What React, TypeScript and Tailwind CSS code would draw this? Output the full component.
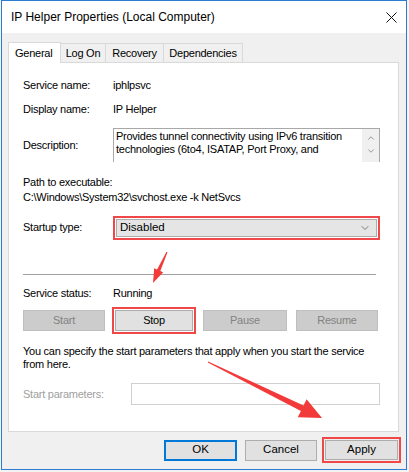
import { ChevronDown, ChevronUp } from "lucide-react";

const font = { fontFamily: '"Liberation Sans", Arial, sans-serif' };

function Btn({ label, disabled, className = "" }: { label: string; disabled?: boolean; className?: string }) {
    return (
        <div
            className={
                "flex items-center justify-center h-[21px] border " +
                (disabled ? "bg-[#cccccc] border-[#bfbfbf] text-[#838383] " : "bg-[#e1e1e1] border-[#adadad] text-black ") +
                className
            }
        >
            {label}
        </div>
    );
}

function RedBox({ children, className = "" }: { children: React.ReactNode; className?: string }) {
    return <div className={"border-2 border-[#f04848] p-[1px] " + className}>{children}</div>;
}

export default function App() {
    return (
        <div className="relative w-[409px] h-[472px] bg-[#f3f3f3] overflow-hidden" style={font}>
            <div className="ml-[1px] w-[406px] h-[470px] border border-[#2b7bd3] bg-[#f0f0f0] flex flex-col text-[11px] tracking-[-0.25px]">
                {/* title bar */}
                <div className="h-[32px] bg-white flex items-center justify-between pl-[9px] pr-[9px] text-[12px] tracking-normal text-black">
                    <span>IP Helper Properties (Local Computer)</span>
                    <svg width="11" height="11" viewBox="0 0 11 11">
                        <path d="M0.5 0.5L10.5 10.5M10.5 0.5L0.5 10.5" stroke="#111" strokeWidth="1" />
                    </svg>
                </div>

                {/* tabs */}
                <div className="flex items-end h-[29px] pl-[6px]">
                    <div className="h-[21px] pl-[6px] bg-white border border-b-0 border-[#d9d9d9] flex items-center w-[53px] relative top-[1px]">General</div>
                    <div className="h-[19px] w-[45px] border border-l-0 border-b-0 border-[#d9d9d9] flex items-center justify-center">Log On</div>
                    <div className="h-[19px] w-[58px] border border-l-0 border-b-0 border-[#d9d9d9] flex items-center justify-center">Recovery</div>
                    <div className="h-[19px] w-[79px] border border-l-0 border-b-0 border-[#d9d9d9] flex items-center justify-center">Dependencies</div>
                </div>

                {/* panel */}
                <div className="ml-[6px] w-[391px] h-[370px] bg-white border border-[#d9d9d9] px-[14px] text-black flex flex-col">
                    <div className="flex h-[14px] mt-[15px] items-center">
                        <span className="w-[90px]">Service name:</span>
                        <span>iphlpsvc</span>
                    </div>
                    <div className="flex h-[14px] mt-[10px] items-center">
                        <span className="w-[90px]">Display name:</span>
                        <span>IP Helper</span>
                    </div>
                    <div className="flex mt-[12px] items-center">
                        <span className="w-[90px]">Description:</span>
                        <div className="w-[267px] h-[34px] border border-[#a8a8a8] border-b-0 flex overflow-hidden">
                            <div className="flex-1 pl-[2px] pt-[1px] leading-[13px]">
                                Provides tunnel connectivity using IPv6 transition technologies (6to4, ISATAP, Port Proxy, and
                            </div>
                            <div className="w-[17px] bg-[#f0f0f0] flex flex-col items-center pt-[4px] text-[#606060]">
                                <ChevronUp size={10} strokeWidth={1.5} />
                                <ChevronDown size={10} strokeWidth={1.5} className="mt-[3px]" />
                            </div>
                        </div>
                    </div>
                    <div className="mt-[13px] leading-[15px]">Path to executable:</div>
                    <div className="leading-[15px]">C:\Windows\System32\svchost.exe -k NetSvcs</div>
                    <div className="flex mt-[11px] items-center">
                        <span className="w-[90px] relative -top-[1px]">Startup type:</span>
                        <RedBox className="w-[267px] h-[24px]">
                            <div className="h-full bg-[#e5e5e5] border border-[#adadad] flex items-center justify-between pl-[3px] pr-[5px] text-[11.5px] tracking-normal">
                                <span>Disabled</span>
                                <ChevronDown size={12} strokeWidth={1.5} className="text-[#555]" />
                            </div>
                        </RedBox>
                    </div>
                    <div className="mt-[34px] w-[353px] h-px bg-[#a0a0a0]"></div>
                    <div className="flex mt-[11px] h-[14px] items-center">
                        <span className="w-[90px]">Service status:</span>
                        <span>Running</span>
                    </div>
                    <div className="flex mt-[7px] items-center">
                        <Btn label="Start" disabled className="w-[82px]" />
                        <RedBox className="ml-[7px] w-[84px] h-[27px]">
                            <Btn label="Stop" className="w-full" />
                        </RedBox>
                        <Btn label="Pause" disabled className="ml-[7px] w-[84px]" />
                        <Btn label="Resume" disabled className="ml-[9px] w-[82px]" />
                    </div>
                    <div className="mt-[11px] leading-[13px] w-[355px]">
                        You can specify the start parameters that apply when you start the service from here.
                    </div>
                    <div className="flex mt-[12px] items-center">
                        <span className="w-[108px] text-[#a0a0a0]">Start parameters:</span>
                        <div className="w-[249px] h-[22px] border border-[#d0d0d0]"></div>
                    </div>
                </div>

                {/* dialog buttons */}
                <div className="flex items-center mt-[5px] pl-[162px] text-[11.5px] tracking-normal">
                    <div className="w-[73px] h-[21px] border-2 border-[#0078d7] bg-[#e1e1e1] flex items-center justify-center">OK</div>
                    <div className="ml-[8px] w-[72px] h-[21px] border border-[#adadad] bg-[#e1e1e1] flex items-center justify-center">Cancel</div>
                    <RedBox className="ml-[5px] w-[79px] h-[26px]">
                        <div className="h-full border border-[#adadad] bg-[#e1e1e1] flex items-center justify-center">Apply</div>
                    </RedBox>
                </div>
            </div>

            {/* annotation arrows */}
            <svg className="absolute left-0 top-0" width="409" height="472" viewBox="0 0 409 472">
                <polygon
                    points="166.5,251.8 167.5,252.2 160.3,271 163.2,272.3 153,283 154.2,268.2 157.1,269.6"
                    fill="#f33a3a"
                />
                <polygon
                    points="208.2,361.5 207.8,362.5 300.9,411 297.8,417.3 322,418 306.6,399.3 303.5,405.6"
                    fill="#f33a3a"
                />
            </svg>
        </div>
    );
}
